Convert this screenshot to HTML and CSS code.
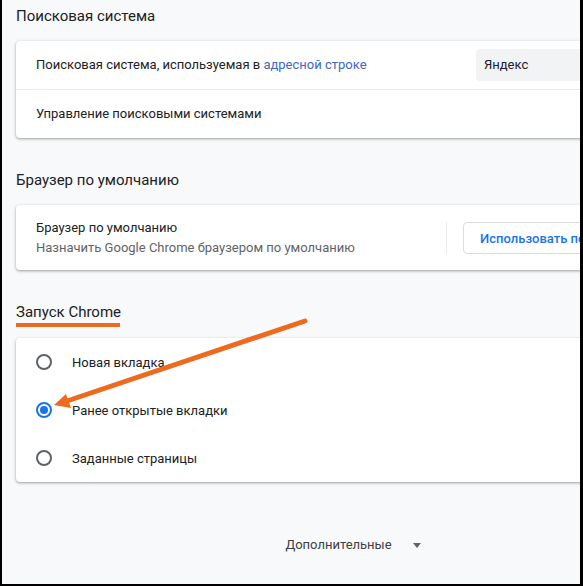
FILE: index.html
```html
<!DOCTYPE html>
<html>
<head>
  <meta charset="UTF-8">
  <title>Настройки</title>
  <link rel="stylesheet" href="styles.css">
</head>
<body>
  <div class="frame">

    <div class="section">
      <h2 class="section-title">Поисковая система</h2>
      <div class="card">
        <div class="row">
          <div class="row-text">Поисковая система, используемая в <a class="link" href="#">адресной строке</a></div>
          <div class="select">Яндекс</div>
        </div>
        <div class="row">
          <div class="row-text">Управление поисковыми системами</div>
        </div>
      </div>
    </div>

    <div class="section">
      <h2 class="section-title">Браузер по умолчанию</h2>
      <div class="card">
        <div class="row row-tall">
          <div class="row-text">
            <div>Браузер по умолчанию</div>
            <div class="secondary">Назначить Google Chrome браузером по умолчанию</div>
          </div>
          <div class="vsep"></div>
          <button class="action-btn">Использовать по умолчанию</button>
        </div>
      </div>
    </div>

    <div class="section">
      <h2 class="section-title startup-title">Запуск Chrome</h2>
      <div class="card">
        <div class="radio-row"><span class="radio"></span>Новая вкладка</div>
        <div class="radio-row"><span class="radio checked"></span>Ранее открытые вкладки</div>
        <div class="radio-row"><span class="radio"></span>Заданные страницы</div>
      </div>
    </div>

    <div class="more">
      <span>Дополнительные</span>
      <span class="caret"></span>
    </div>

  </div>

  <!-- annotation drawn over the screenshot -->
  <svg class="overlay" width="583" height="586" viewBox="0 0 583 586">
    <rect x="16" y="323" width="104" height="4" fill="#ee6a1e"/>
    <line x1="305" y1="321" x2="64" y2="402" stroke="#ee6a1e" stroke-width="5" stroke-linecap="round"/>
    <polygon points="54,405 66,394 71,408" fill="#ee6a1e"/>
  </svg>
</body>
</html>
```

FILE: styles.css
```css
html, body {
  margin: 0;
  padding: 0;
}

body {
  position: relative;
  font-family: Roboto, "Liberation Sans", sans-serif;
  color: #202124;
}

.frame {
  width: 583px;
  height: 586px;
  box-sizing: border-box;
  border-left: 2px solid #000;
  border-right: 3px solid #000;
  border-bottom: 2px solid #000;
  background: #f8f9fa;
  overflow: hidden;
  padding: 6px 0 0 14px;
}

.section + .section {
  margin-top: 32px;
}

.section-title {
  margin: 0 0 15px;
  font-size: 15px;
  line-height: 20px;
  font-weight: 400;
  color: #202124;
}

.startup-title {
  margin-bottom: 16px;
}

.card {
  width: 680px;
  background: #fff;
  border-radius: 4px;
  box-shadow: 0 1px 2px rgba(60, 64, 67, 0.3), 0 1px 3px 1px rgba(60, 64, 67, 0.15);
}

.row {
  display: flex;
  align-items: center;
  min-height: 48px;
  padding: 0 20px;
  font-size: 13px;
  line-height: 20px;
}

.row + .row {
  border-top: 1px solid #e8eaed;
}

.row-tall {
  padding: 13px 20px 12px;
  min-height: 0;
}

.row-text {
  flex: 1;
}

.secondary {
  color: #5f6368;
}

.link {
  color: #3b68c9;
  text-decoration: none;
}

.select {
  width: 200px;
  height: 32px;
  box-sizing: border-box;
  padding: 0 8px;
  display: flex;
  align-items: center;
  background: #f1f3f4;
  border-radius: 4px;
}

.vsep {
  width: 1px;
  height: 32px;
  background: #e8eaed;
  margin: 0 16px;
}

.action-btn {
  flex-shrink: 0;
  height: 32px;
  padding: 0 16px;
  background: #fff;
  border: 1px solid #dadce0;
  border-radius: 4px;
  color: #1a73e8;
  font-family: inherit;
  font-size: 13px;
  font-weight: 500;
}

.radio-row {
  display: flex;
  align-items: center;
  gap: 20px;
  height: 48px;
  padding: 0 20px;
  font-size: 13px;
}

.radio {
  width: 16px;
  height: 16px;
  box-sizing: border-box;
  border: 2px solid #5f6368;
  border-radius: 50%;
  display: flex;
  align-items: center;
  justify-content: center;
}

.radio.checked {
  border-color: #1a73e8;
}

.radio.checked::after {
  content: "";
  width: 8px;
  height: 8px;
  border-radius: 50%;
  background: #1a73e8;
}

.more {
  width: 674px;
  margin-top: 53px;
  display: flex;
  justify-content: center;
  align-items: center;
  gap: 21px;
  font-size: 13px;
  line-height: 20px;
  color: #3c4043;
}

.caret {
  width: 0;
  height: 0;
  border-left: 4px solid transparent;
  border-right: 4px solid transparent;
  border-top: 5px solid #5f6368;
}

.overlay {
  position: absolute;
  top: 0;
  left: 0;
  pointer-events: none;
}
```
